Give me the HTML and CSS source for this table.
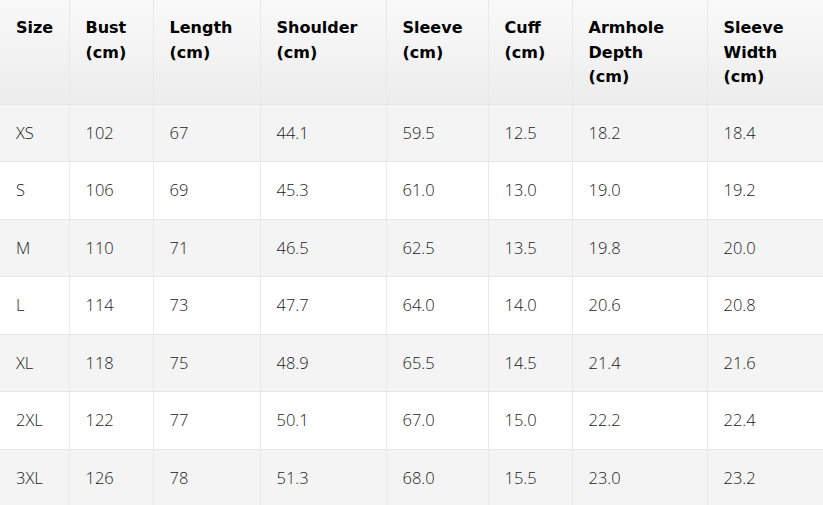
FILE: index.html
```html
<!DOCTYPE html>
<html lang="en">
<head>
<meta charset="utf-8">
<title>Size Chart</title>
<link rel="stylesheet" href="styles.css">
</head>
<body>
<table class="size-table">
  <colgroup>
    <col class="c-size">
    <col class="c-bust">
    <col class="c-length">
    <col class="c-shoulder">
    <col class="c-sleeve">
    <col class="c-cuff">
    <col class="c-armhole">
    <col class="c-width">
  </colgroup>
  <thead>
    <tr>
      <th>Size</th>
      <th>Bust<br>(cm)</th>
      <th>Length<br>(cm)</th>
      <th>Shoulder<br>(cm)</th>
      <th>Sleeve<br>(cm)</th>
      <th>Cuff<br>(cm)</th>
      <th>Armhole<br>Depth<br>(cm)</th>
      <th>Sleeve<br>Width<br>(cm)</th>
    </tr>
  </thead>
  <tbody>
    <tr><td>XS</td><td>102</td><td>67</td><td>44.1</td><td>59.5</td><td>12.5</td><td>18.2</td><td>18.4</td></tr>
    <tr><td>S</td><td>106</td><td>69</td><td>45.3</td><td>61.0</td><td>13.0</td><td>19.0</td><td>19.2</td></tr>
    <tr><td>M</td><td>110</td><td>71</td><td>46.5</td><td>62.5</td><td>13.5</td><td>19.8</td><td>20.0</td></tr>
    <tr><td>L</td><td>114</td><td>73</td><td>47.7</td><td>64.0</td><td>14.0</td><td>20.6</td><td>20.8</td></tr>
    <tr><td>XL</td><td>118</td><td>75</td><td>48.9</td><td>65.5</td><td>14.5</td><td>21.4</td><td>21.6</td></tr>
    <tr><td>2XL</td><td>122</td><td>77</td><td>50.1</td><td>67.0</td><td>15.0</td><td>22.2</td><td>22.4</td></tr>
    <tr><td>3XL</td><td>126</td><td>78</td><td>51.3</td><td>68.0</td><td>15.5</td><td>23.0</td><td>23.2</td></tr>
  </tbody>
</table>
</body>
</html>
```

FILE: styles.css
```css
html, body {
  margin: 0;
  padding: 0;
  background: #ffffff;
}

body {
  font-family: "Open Sans", "Noto Sans", "Liberation Sans", sans-serif;
  font-size: 16px;
  color: #222222;
}

.size-table {
  width: 823px;
  table-layout: fixed;
  border-collapse: collapse;
  border-spacing: 0;
}

.c-size { width: 69px; }
.c-bust { width: 84px; }
.c-length { width: 107px; }
.c-shoulder { width: 126px; }
.c-sleeve { width: 102px; }
.c-cuff { width: 84px; }
.c-armhole { width: 135px; }
.c-width { width: 116px; }

.size-table th,
.size-table td {
  text-align: left;
  padding: 16px 16px;
  border-right: 1px solid #e9e9e9;
  border-bottom: 1px solid #e6e6e6;
}

.size-table th {
  vertical-align: top;
  font-family: "DejaVu Sans", "Open Sans", sans-serif;
  font-size: 16px;
  font-weight: 700;
  color: #000000;
  line-height: 24.5px;
  padding-bottom: 14px;
  background: linear-gradient(to bottom, #f9f9f9 0%, #ececec 100%);
  height: 73px;
}

.size-table td {
  vertical-align: middle;
  font-weight: 300;
  font-size: 16.5px;
  line-height: 24.5px;
  color: #1a1a1a;
}

.size-table tbody tr:nth-child(odd) td {
  background: #f4f4f4;
}

.size-table tbody tr:nth-child(even) td {
  background: #ffffff;
}
```
